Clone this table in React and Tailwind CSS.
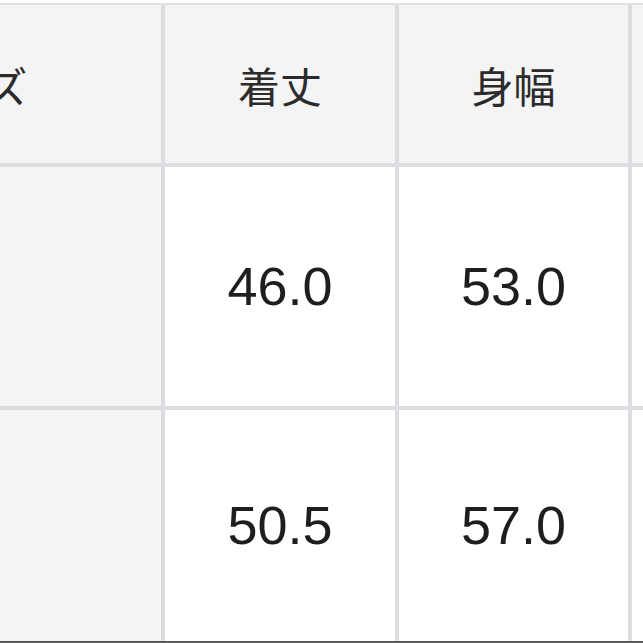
const rows = [
  ['', '46.0', '53.0', ''],
  ['', '50.5', '57.0', ''],
]

const headers = ['サイズ', '着丈', '身幅', '']

function App() {
  return (
    <div className="h-[643px] w-[643px] overflow-hidden bg-white">
      <div className="mt-[3px] ml-[-231px] w-[1200px] border-t-2 border-[#e0e1e4] bg-[#dcdde0]">
        <div className="grid grid-cols-[392px_230px_229px_230px] grid-rows-[158px_239px_231px] gap-[4px]">
          {headers.map((h, i) => (
            <div
              key={'h' + i}
              className="flex items-center justify-center bg-[#f4f4f5] text-[42px] font-normal text-[#2b2b2b] [font-family:'Noto_Sans_CJK_JP',sans-serif]"
            >
              {h}
            </div>
          ))}
          {rows.map((r, ri) =>
            r.map((c, ci) => (
              <div
                key={ri + '-' + ci}
                className={
                  ci === 0
                    ? 'bg-[#f4f4f5]'
                    : 'flex items-center justify-center bg-white text-[54px] text-[#1e1e1e] [font-family:"Liberation_Sans",Arial,sans-serif]'
                }
              >
                {c}
              </div>
            ))
          )}
        </div>
        <div className="h-[2px] bg-[#5a5a5a]"></div>
      </div>
    </div>
  )
}

export default App
